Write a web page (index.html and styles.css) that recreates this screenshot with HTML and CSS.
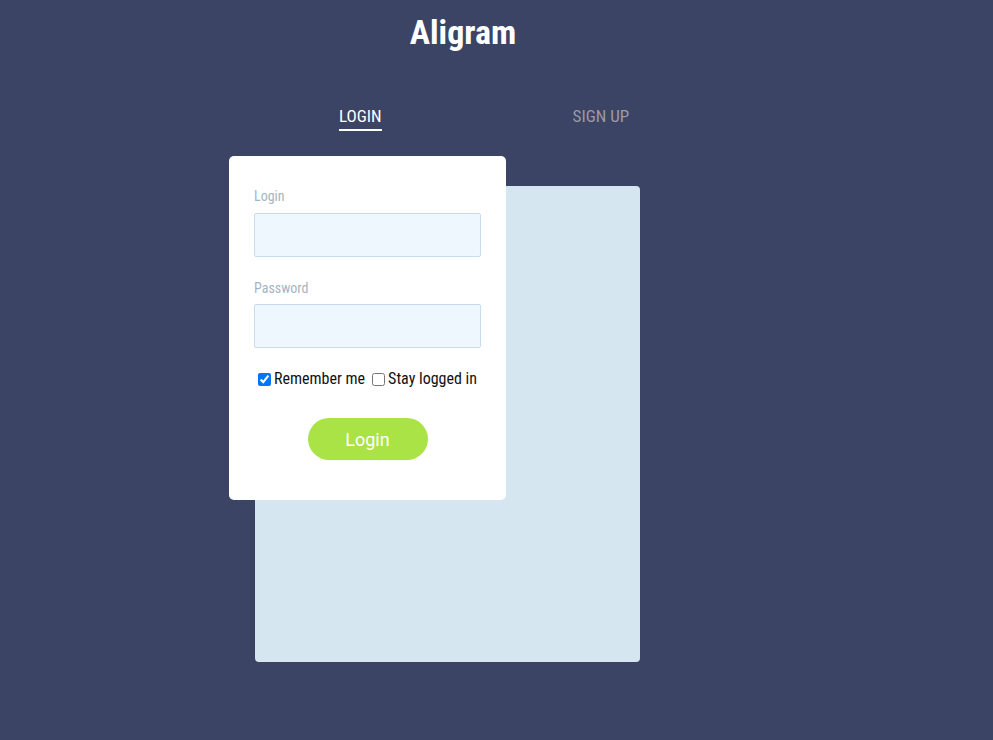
FILE: index.html
```html
<!DOCTYPE html>
<html>
<head>
<meta charset="utf-8">
<link rel="stylesheet" href="styles.css">
</head>
<body>
<header class="brand">Aligram</header>
<nav class="tabs">
  <a class="tab active">LOGIN</a>
  <a class="tab">SIGN UP</a>
</nav>
<main class="stage">
  <div class="panel"></div>
  <form class="card">
    <label class="field-label">Login</label>
    <input class="field" type="text">
    <label class="field-label pw">Password</label>
    <input class="field" type="password">
    <div class="checks">
      <label class="check"><input type="checkbox" checked>Remember me</label>
      <label class="check"><input type="checkbox">Stay logged in</label>
    </div>
    <div class="actions"><button type="button" class="btn">Login</button></div>
  </form>
</main>
</body>
</html>
```
FILE: styles.css
```css
* { box-sizing: border-box; }
body {
  margin: 0;
  background: #3c4466;
  font-family: "Roboto Condensed", Roboto, "Liberation Sans", sans-serif;
  height: 740px;
  overflow: hidden;
}
.brand {
  width: 926px;
  text-align: center;
  color: #fff;
  font-weight: 700;
  font-size: 34px;
  line-height: 40px;
  padding-top: 12px;
}
.tabs {
  display: flex;
  margin: 54px 0 0 339px;
  height: 36px;
}
.tab {
  font-size: 17px;
  line-height: 20px;
  color: #9b9ba3;
  height: 25px;
}
.tab.active {
  color: #fff;
  border-bottom: 2px solid #fff;
  margin-right: 191px;
}
.stage {
  display: grid;
  margin-left: 229px;
  margin-top: 14px;
}
.panel, .card { grid-area: 1 / 1; }
.panel {
  margin: 30px 0 0 26px;
  width: 385px;
  height: 476px;
  background: #d5e6f0;
  border-radius: 4px;
}
.card {
  position: relative;
  z-index: 1;
  width: 277px;
  height: 344px;
  background: #fff;
  border-radius: 5px;
  padding: 31px 25px 0 25px;
  align-self: start;
  display: flex;
  flex-direction: column;
}
.field-label {
  font-size: 14px;
  line-height: 18px;
  color: #a5b5be;
  margin-bottom: 8px;
}
.field-label.pw { margin-top: 22px; margin-bottom: 7px; }
.field {
  width: 227px;
  height: 44px;
  background: #eef7fd;
  border: 1px solid #c9dcee;
  border-radius: 2px;
  outline: none;
}
.checks {
  display: flex;
  gap: 6px;
  margin-top: 21px;
  padding-left: 3px;
}
.check {
  display: flex;
  align-items: center;
  font-size: 16px;
  line-height: 20px;
  color: #111;
}
.check input {
  margin: 0 3px 0 1px;
  width: 13px;
  height: 13px;
}
.actions {
  display: flex;
  justify-content: center;
  margin-top: 29px;
}
.btn {
  width: 120px;
  height: 42px;
  border: none;
  border-radius: 21px;
  background: #a9e346;
  color: #fff;
  font-family: Roboto, "Liberation Sans", sans-serif;
  font-size: 18px;
}
```
